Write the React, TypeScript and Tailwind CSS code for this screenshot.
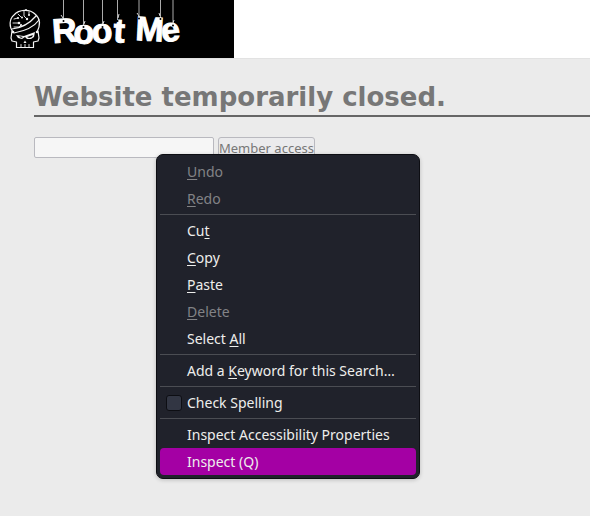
import { Fragment } from "react";

type Item = { before?: string; accessKey?: string; after?: string; disabled?: boolean; active?: boolean };

const groups: Item[][] = [
  [
    { accessKey: "U", after: "ndo", disabled: true },
    { accessKey: "R", after: "edo", disabled: true },
  ],
  [
    { before: "Cu", accessKey: "t" },
    { accessKey: "C", after: "opy" },
    { accessKey: "P", after: "aste" },
    { accessKey: "D", after: "elete", disabled: true },
    { before: "Select ", accessKey: "A", after: "ll" },
  ],
  [{ before: "Add a ", accessKey: "K", after: "eyword for this Search…" }],
];

const tail: Item[] = [{ before: "Inspect Accessibility Properties" }, { before: "Inspect (Q)", active: true }];

function MenuItem({ before, accessKey, after, disabled, active }: Item) {
  return (
    <button
      type="button"
      role="menuitem"
      disabled={disabled}
      className={`block h-[27px] w-full rounded-[4px] pl-[27px] text-left whitespace-pre ${
        active ? "bg-[#a400a4] text-[#eeeeec]" : disabled ? "text-[#828386]" : "text-[#eeeeec]"
      }`}
    >
      {before}
      {accessKey && <span className="underline decoration-1 underline-offset-2">{accessKey}</span>}
      {after}
    </button>
  );
}

function Separator() {
  return <hr className="my-[2px] border-t border-[#4b4d53]" />;
}

function ContextMenu() {
  return (
    <div
      role="menu"
      className="absolute top-[17px] left-[122px] w-[264px] rounded-[7px] border border-[#0d0e13] bg-[#20222b] p-[3px] font-['Noto_Sans',sans-serif] text-[14px] leading-[27px] shadow-[0_1px_4px_rgba(0,0,0,0.2)]"
    >
      {groups.map((items, g) => (
        <Fragment key={g}>
          {items.map((item, i) => (
            <MenuItem key={i} {...item} />
          ))}
          <Separator />
        </Fragment>
      ))}
      <label className="flex h-[27px] items-center gap-[5px] pl-[6px] text-[#eeeeec]">
        <input
          type="checkbox"
          className="size-[16px] appearance-none rounded-[3px] border border-[#0d0e13] bg-[#323643]"
        />
        Check Spelling
      </label>
      <Separator />
      {tail.map((item, i) => (
        <MenuItem key={i} {...item} />
      ))}
    </div>
  );
}

function Logo() {
  return (
    <svg viewBox="0 0 234 58" className="h-[58px] w-[234px] bg-black" role="img" aria-label="Root Me">
      <g fill="none" stroke="#f4f4f4" strokeWidth="1.2" strokeLinejoin="round" strokeLinecap="round">
        <path d="M13 32C9 27 9 19 14 15C19 9 30 9 35 14C41 19 40 26 37 32" />
        <path d="M12 31L11 38L12 41L16.500 42V47.500H33.500V42L38 41L39 38L38 31" />
        <path d="M12 29C21 28 30 23 36 16M14 33C25 31 34 27 39 20" />
        <path d="M13 23H18M14 27H19L21 25M14 19L18 18M18 14L21 17M24 11V16L27 19M29 12V15" strokeWidth="0.9" />
        <path d="M21 47V44.500M25 47V44.500M29 47V44.500" strokeWidth="0.9" />
      </g>
      <g fill="#f4f4f4">
        <circle cx="19" cy="23" r="1.3" />
        <circle cx="18" cy="18" r="1.1" />
        <circle cx="22" cy="17.500" r="1" />
        <circle cx="27" cy="19" r="1.2" />
        <circle cx="29" cy="15" r="1" />
        <circle cx="21" cy="25" r="1" />
        <circle cx="26" cy="10" r="1" />
        <circle cx="13" cy="32" r="1.3" />
        <circle cx="37" cy="32" r="1.3" />
        <path d="M16 35L24 36L35 32L34 37L31 39H27L25 37L22 39L18 38Z" />
        <path d="M25 40.500L26.500 43H23.500Z" />
      </g>
      <path d="M19 36L23 37L21 38ZM27 37L33 35L32 37L29 38Z" fill="#000" />
      <path
        d="M63.5 0V20M83.5 0V26M102.5 0V26M117.5 0V20M160.5 0V18"
        stroke="#aaaaaa"
        strokeWidth="1"
      />
      <path d="M139 0V18M173 0V25" stroke="#555555" strokeWidth="2" />
      <text
        x="53 73 92 113 135 162"
        y="43 43 43 42 40 42"
        rotate="-4 3 -2 3 3 -5"
        fill="#ffffff"
        stroke="#ffffff"
        strokeWidth="1"
        className="font-['Liberation_Sans',sans-serif] text-[34px] font-bold"
      >
        RootMe
      </text>
      <g fill="#000">
        <circle cx="63.5" cy="21" r="1" />
        <circle cx="83.5" cy="27" r="1" />
        <circle cx="102.5" cy="27" r="1" />
        <circle cx="117.5" cy="21" r="1" />
        <circle cx="139" cy="18.5" r="1" />
        <circle cx="160.5" cy="19" r="1" />
        <circle cx="173" cy="25.5" r="1" />
      </g>
      <path
        d="M63 18L61 15M84 24L85 21M103 24L104 21M118 18L119 14M139 16L137 13M160 16L159 13M173 23L174 20"
        stroke="#d8d8d8"
        strokeWidth="1"
      />
    </svg>
  );
}

export default function App() {
  return (
    <div className="min-h-screen bg-[#ebebeb]">
      <header className="border-b border-[#e2e2e2] bg-white">
        <Logo />
      </header>
      <main className="pt-[21px] pl-[34px]">
        <h1 className="border-b-2 border-[#666666] font-['DejaVu_Sans',sans-serif] text-[26px] leading-[35px] font-bold text-[#777777]">
          Website temporarily closed.
        </h1>
        <form className="relative mt-[20px] flex items-start gap-[4px] font-['Noto_Sans',sans-serif]">
          <input
            type="text"
            aria-label="Member access"
            className="h-[21px] w-[180px] rounded-[2px] border border-[#b9b9bf] bg-[#f6f6f6] px-[2px] text-[13px]"
          />
          <button
            type="button"
            className="h-[22px] rounded-[3px] border border-[#b9b9bf] bg-[#ebebed] text-[13px] leading-[20px] whitespace-nowrap text-[#777777]"
          >
            Member access
          </button>
          <ContextMenu />
        </form>
      </main>
    </div>
  );
}
